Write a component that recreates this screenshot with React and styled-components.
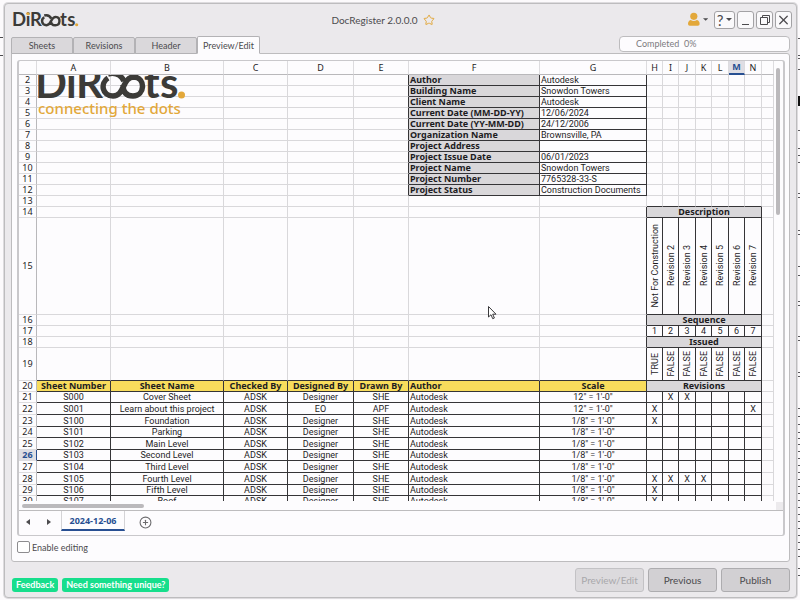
import React from "react";
import styled, { createGlobalStyle, css } from "styled-components";
import { Star, X, CirclePlus } from "lucide-react";

const UI = `Lato, "Open Sans", sans-serif`;
const SHEET = `Roboto, "Noto Sans", sans-serif`;
const SHEET_BOLD = `"Noto Sans", "Open Sans", sans-serif`;
const INK = "#3c3b38";
const GOLD = "#e3a83a";
const LINE = "#bdbcbe";
const BLUE = "#274f92";

const Global = createGlobalStyle`
  * { box-sizing: border-box; }
  html, body { margin: 0; background: #fcfafc; }
  button, input { font: inherit; color: inherit; margin: 0; padding: 0; }
`;

const Page = styled.div`
  position: relative;
  display: flex;
  height: 100vh;
  min-height: 420px;
  padding: 3px 3px 2px 4px;
  font-family: ${UI};
  font-size: 9px;
  color: #4c4b4e;
  overflow: hidden;
`;
const Backdrop = styled.svg`
  position: absolute;
  top: 0;
  ${(p) => (p.$side === "right" ? "right: 0;" : "left: 0;")}
`;
const Window = styled.main`
  position: relative;
  flex: 1;
  min-width: 0;
  display: flex;
  flex-direction: column;
  padding: 0 6px 5px 6px;
  background: #ebe9ec;
  border: 1px solid ${LINE};
  border-radius: 4px;
  box-shadow: 0 0 0 1px #dddbde;
`;
const TitleBar = styled.header`
  display: flex;
  justify-content: space-between;
  align-items: center;
  height: 31px;
  margin-right: -2px;
  padding-left: 2px;
`;
const Title = styled.h1`
  display: flex;
  align-items: center;
  gap: 5px;
  margin: 0;
  font-size: 10px;
  font-weight: 400;
  line-height: 16px;
`;
const TitleActions = styled.div`
  display: flex;
  justify-content: flex-end;
  align-items: center;
  gap: 2px;
`;
const IconButton = styled.button`
  display: flex;
  align-items: center;
  justify-content: center;
  gap: 3px;
  width: ${(p) => p.$w || 17}px;
  height: 18px;
  border: 1px solid #a3a2a5;
  border-radius: 3px;
  background: #faf9fb;
  ${(p) => p.$bare && css`
    margin-right: 3px;
    border-color: transparent;
    background: transparent;
  `}
`;
const Help = styled.span`
  font-size: 15px;
  line-height: 16px;
`;
const TabRow = styled.div`
  display: flex;
  justify-content: space-between;
  align-items: flex-end;
  height: 18px;
`;
const Tabs = styled.nav`
  display: flex;
  align-items: flex-end;
  margin-bottom: -1px;
`;
const Tab = styled.button`
  position: relative;
  width: ${(p) => (p.$active ? 63 : 62)}px;
  height: ${(p) => (p.$active ? 18 : 17)}px;
  border: 1px solid #b3b2b5;
  border-bottom-color: ${(p) => (p.$active ? "#fdfcfe" : "#b3b2b5")};
  border-radius: 2px 2px 0 0;
  background: ${(p) => (p.$active ? "#fdfcfe" : "#dad8db")};
  white-space: nowrap;
`;
const Progress = styled.div`
  width: 171px;
  height: 16px;
  margin-bottom: 1px;
  padding-left: 16px;
  border: 1px solid ${LINE};
  border-radius: 4px;
  background: #fdfcfe;
  color: #7c7b7e;
  line-height: 14px;
  white-space: pre;
`;
const Panel = styled.section`
  flex: 1;
  min-height: 0;
  display: flex;
  flex-direction: column;
  padding: 6px 4px 0 5px;
  border: 1px solid ${LINE};
  border-radius: 0 3px 3px 3px;
  background: #fdfcfe;
`;
const SheetBox = styled.div`
  flex: 1;
  min-height: 0;
  display: flex;
  flex-direction: column;
  border: 1px solid #c9c8cb;
  border-width: 1px 2px;
  border-radius: 3px;
`;
const SheetMain = styled.div`
  flex: 1;
  min-height: 0;
  display: flex;
`;
const Viewport = styled.div`
  position: relative;
  flex: 1;
  min-width: 0;
  overflow: hidden;
`;
const VTrack = styled.div`
  width: 9px;
  padding: 7px 3px 0 2px;
`;
const VThumb = styled.div`
  height: 34%;
  border-radius: 2px;
  background: #bbb9bc;
`;
const HTrack = styled.div`
  display: flex;
  align-items: center;
  justify-content: space-between;
  height: 9px;
  padding-left: 3px;
`;
const HThumb = styled.div`
  width: 16%;
  height: 4px;
  border-radius: 2px;
  background: #bbb9bc;
`;
const Corner = styled.div`
  width: 7px;
  height: 8px;
  background: #eceaed;
`;
const Grid = styled.table`
  width: 100%;
  table-layout: fixed;
  border-collapse: separate;
  border-spacing: 0;
  font-family: ${SHEET};
  font-size: 9px;
  line-height: 10px;
  color: #1d1c1f;
`;
const Col = styled.col`
  width: ${(p) => (p.$w ? `${p.$w}px` : "auto")};
`;
const Row = styled.tr`
  height: ${(p) => p.$h}px;
`;
const active = css`
  background: #dfdee4;
  color: ${BLUE};
  font-weight: 700;
`;
const ColHead = styled.th`
  height: 14px;
  padding: 0;
  border-right: 1px solid #dddcdf;
  border-bottom: 1px solid #b9b8bb;
  font-family: ${SHEET_BOLD};
  font-weight: 400;
  ${(p) => p.$active && active}
  ${(p) => p.$active && css`border-bottom: 2px solid ${BLUE};`}
`;
const RowHead = styled.th`
  padding: 0;
  border-right: 1px solid #b9b8bb;
  border-bottom: 1px solid #dddcdf;
  font-family: ${SHEET_BOLD};
  font-weight: 400;
  ${(p) => p.$active && active}
  ${(p) => p.$active && css`border-right-color: ${BLUE};`}
`;
const Cell = styled.td`
  padding: 0 1px;
  border-right: 1px solid ${(p) => (p.$right ? "#353437" : "#d9d8db")};
  border-bottom: 1px solid ${(p) => (p.$bottom ? "#353437" : "#d9d8db")};
  background: ${(p) => p.$bg || "transparent"};
  font-family: ${(p) => (p.$bold ? SHEET_BOLD : SHEET)};
  font-weight: ${(p) => (p.$bold ? 700 : 400)};
  text-align: ${(p) => (p.$left ? "left" : "center")};
  white-space: nowrap;
`;
const Vertical = styled.span`
  display: inline-block;
  writing-mode: vertical-rl;
  transform: rotate(180deg);
  line-height: 12px;
  vertical-align: middle;
`;
const LogoLayer = styled.div`
  position: absolute;
  top: 14px;
  left: 19px;
  height: 45px;
  overflow: hidden;
  display: flex;
  align-items: flex-end;
`;
const SheetTabs = styled.div`
  display: flex;
  align-items: flex-start;
  height: 25px;
  border-top: 1px solid ${LINE};
`;
const Arrow = styled.button`
  width: 21px;
  height: 20px;
  padding-right: 3px;
  border: 0;
  background: none;
`;
const SheetTab = styled.button`
  width: 64px;
  height: 20px;
  border: 1px solid #d4d3d6;
  border-width: 0 1px 2px;
  border-bottom-color: ${BLUE};
  background: none;
  color: ${BLUE};
  font-family: ${SHEET_BOLD};
  font-weight: 700;
  font-size: 9px;
`;
const AddSheet = styled.button`
  display: flex;
  align-items: center;
  justify-content: center;
  width: 40px;
  height: 22px;
  border: 0;
  background: none;
  color: #6c6b6e;
`;
const Option = styled.label`
  display: flex;
  align-items: center;
  gap: 2px;
  height: 25px;
  padding-bottom: 3px;
`;
const Check = styled.input`
  appearance: none;
  width: 13px;
  height: 12px;
  border: 1px solid #8d8c8f;
  border-radius: 2px;
  background: #fff;
`;
const Footer = styled.footer`
  display: flex;
  justify-content: space-between;
  align-items: flex-end;
  height: 30px;
`;
const Links = styled.div`
  display: flex;
  gap: 4px;
  padding-left: 1px;
`;
const Pill = styled.a`
  padding: 0 4px;
  border-radius: 3px;
  background: #17de8c;
  color: #fff;
  font-weight: 700;
  line-height: 14px;
  text-decoration: none;
`;
const Actions = styled.div`
  display: flex;
  gap: 4px;
`;
const Action = styled.button`
  width: 69px;
  height: 24px;
  border: 1px solid #adacaf;
  border-radius: 3px;
  background: #d2d0d3;
  font-size: 10px;
  &:disabled {
    background: #dcdadd;
    border-color: #c3c2c5;
    color: #a9a8ab;
  }
`;
const LogoDrawing = styled.svg`
  display: block;
  flex: none;
  overflow: visible;
`;

function Logo({ width, tagline }) {
  const h = tagline ? 54 : 34;
  return (
    <LogoDrawing width={width} height={Math.round((width * h) / 148)} viewBox={`0 0 148 ${h}`} role="img" aria-label="DiRoots">
      <g fill={INK} fontFamily="Lato, sans-serif" fontSize="42" fontWeight="700">
        <text x="-3 28 38" y="32">DiR</text>
        <text x="106 122" y="32">ts</text>
      </g>
      <circle cx="33.500" cy="4" r="3.600" fill={tagline ? INK : GOLD} />
      <g fill="none" stroke={INK} strokeWidth="5.500">
        <path d="M70 12 C62 17 64 30 75 30 C87 30 84 11 96 11 C108 12 107 30 95 30 C86 30 85 23 85 19" />
        <path d="M70 8 C77 6 83 9 86 15" />
      </g>
      <circle cx="143.500" cy="29" r="3.500" fill={GOLD} />
      {tagline && (
        <text x="0" y="48" fill={GOLD} fontFamily='"Noto Sans", sans-serif' fontSize="15" fontWeight="500">
          connecting the dots
        </text>
      )}
    </LogoDrawing>
  );
}

const Caret = ({ d = "M0 0h6L3 3z", w = 6, h = 3 }) => (
  <svg width={w} height={h} viewBox={`0 0 ${w} ${h}`} fill="#4c4b4e"><path d={d} /></svg>
);

const COLS = [
  ["A", 74], ["B", 113], ["C", 64], ["D", 66], ["E", 55], ["F", 131], ["G", 107],
  ["H", 16], ["I", 16], ["J", 17], ["K", 16], ["L", 17], ["M", 16], ["N", 17], ["", 0],
];
const HEIGHTS = { 15: 97, 19: 33, 22: 12, 23: 12, 25: 12, 27: 12, 28: 12 };
const INFO = [
  ["Author", "Autodesk"], ["Building Name", "Snowdon Towers"], ["Client Name", "Autodesk"],
  ["Current Date (MM-DD-YY)", "12/06/2024"], ["Current Date (YY-MM-DD)", "24/12/2006"],
  ["Organization Name", "Brownsville, PA"], ["Project Address", ""], ["Project Issue Date", "06/01/2023"],
  ["Project Name", "Snowdon Towers"], ["Project Number", "7765328-33-S"], ["Project Status", "Construction Documents"],
];
const BANDS = { 14: "Description", 16: "Sequence", 18: "Issued", 20: "Revisions" };
const HEADINGS = ["Sheet Number", "Sheet Name", "Checked By", "Designed By", "Drawn By", "Author", "Scale"];
const SHEETS = [
  ["S000", "Cover Sheet", " XX    "], ["S001", "Learn about this project", "X     X"],
  ["S100", "Foundation", "X"], ["S101", "Parking", ""], ["S102", "Main Level", ""],
  ["S103", "Second Level", ""], ["S104", "Third Level", ""], ["S105", "Fourth Level", "XXXX"],
  ["S106", "Fifth Level", "X"], ["S107", "Roof", "X"],
];

const boxed = (r, c) =>
  (r >= 2 && r <= 12 && (c === 5 || c === 6)) || (r >= 14 && c >= 7 && c <= 13) || (r >= 20 && c <= 6);

function content(r, c) {
  if (c > 13) return "";
  if (r <= 12) return c === 5 || c === 6 ? INFO[r - 2][c - 5] : "";
  const k = c - 7;
  if (r === 15 && k >= 0) return <Vertical>{k === 0 ? "Not For Construction" : `Revision ${k + 1}`}</Vertical>;
  if (r === 17 && k >= 0) return k + 1;
  if (r === 19 && k >= 0) return <Vertical>{k === 0 ? "TRUE" : "FALSE"}</Vertical>;
  if (r === 20) return HEADINGS[c];
  if (r > 20) {
    const [num, name, marks] = SHEETS[r - 21];
    const odd = r === 22;
    if (k >= 0) return (marks[k] || "").trim();
    return [num, name, "ADSK", odd ? "EO" : "Designer", odd ? "APF" : "SHE", "Autodesk", r < 23 ? `12" = 1'-0"` : `1/8" = 1'-0"`][c];
  }
  return "";
}

function cells(r) {
  const out = [];
  for (let c = 0; c < COLS.length; c++) {
    const span = c === 7 && BANDS[r] ? 7 : 1;
    const last = c + span - 1;
    const label = r <= 12 && c === 5;
    out.push(
      <Cell
        key={c}
        colSpan={span}
        $right={boxed(r, last) || boxed(r, last + 1)}
        $bottom={boxed(r, c) || boxed(r + 1, c)}
        $bg={span > 1 || label ? "#d9d7da" : r === 20 && c < 7 ? "#f8dc5c" : undefined}
        $bold={span > 1 || label || r === 20}
        $left={c === 5 || (r <= 12 && c === 6)}
      >
        {span > 1 ? BANDS[r] : content(r, c)}
      </Cell>
    );
    c = last;
  }
  return out;
}

function Spreadsheet() {
  const rows = Array.from({ length: 29 }, (_, i) => i + 2);
  return (
    <Viewport>
      <Grid>
        <colgroup>
          <Col $w={18} />
          {COLS.map(([n, w]) => <Col key={n} $w={w} />)}
        </colgroup>
        <thead>
          <tr>
            <ColHead />
            {COLS.map(([n]) => <ColHead key={n} $active={n === "M"}>{n}</ColHead>)}
          </tr>
        </thead>
        <tbody>
          {rows.map((r) => (
            <Row key={r} $h={HEIGHTS[r] || 11}>
              <RowHead $active={r === 26}>{r}</RowHead>
              {cells(r)}
            </Row>
          ))}
        </tbody>
      </Grid>
      <LogoLayer><Logo width={148} tagline /></LogoLayer>
    </Viewport>
  );
}

const Pointer = styled.svg`
  position: absolute;
  left: 61%;
  top: 51%;
`;

const MARKS = [38, 55, 58, 69, 130, 148, 155, 162, 193, 197, 230, 234, 266, 275, 301, 305, 336, 340, 372, 376, 408, 416, 424, 432, 438, 444, 451, 458, 465, 472, 479, 486, 493, 500, 507, 514, 521, 528, 535, 542, 549, 556, 568, 575];

export default function App() {
  return (
    <Page>
      <Global />
      <Backdrop width="4" height="600" $side="left" stroke="#4a494c">
        <path d="M0 37.500h4M0 55.500h4" />
      </Backdrop>
      <Backdrop width="3" height="600" $side="right" stroke="#5a595c">
        <path d={MARKS.map((y) => `M0 ${y}.500h3`).join("")} />
        <path d="M1.500 96v10" strokeWidth="3" stroke="#111" />
      </Backdrop>
      <Window>
        <TitleBar>
          <Logo width={66} />
          <Title>DocRegister 2.0.0.0 <Star size={12} color={GOLD} strokeWidth={2} /></Title>
          <TitleActions>
            <IconButton $bare $w={22} aria-label="Account">
              <svg width="13" height="15" viewBox="0 0 13 15" fill={GOLD}>
                <circle cx="6.500" cy="4" r="4" />
                <path d="M3 8q3.500 2.500 7 0 3 1 3 4.500 0 2-2 2H2q-2 0-2-2Q0 9 3 8z" />
              </svg>
              <Caret />
            </IconButton>
            <IconButton $w={21} aria-label="Help"><Help>?</Help><Caret /></IconButton>
            <IconButton aria-label="Minimize">
              <svg width="9" height="12"><path d="M1 10.500h7" stroke="#4c4b4e" /></svg>
            </IconButton>
            <IconButton aria-label="Restore">
              <svg width="12" height="12" fill="none" stroke="#4c4b4e">
                <path d="M1.500 3.500h7v7h-7zM3.500 3.500v-2h7v7h-2" />
              </svg>
            </IconButton>
            <IconButton aria-label="Close"><X size={16} strokeWidth={2} /></IconButton>
          </TitleActions>
        </TitleBar>
        <TabRow>
          <Tabs>
            <Tab>Sheets</Tab>
            <Tab>Revisions</Tab>
            <Tab>Header</Tab>
            <Tab $active>Preview/Edit</Tab>
          </Tabs>
          <Progress>{"Completed  0%"}</Progress>
        </TabRow>
        <Panel>
          <SheetBox>
            <SheetMain>
              <Spreadsheet />
              <VTrack><VThumb /></VTrack>
            </SheetMain>
            <HTrack><HThumb /><Corner /></HTrack>
            <SheetTabs>
              <Arrow aria-label="Previous sheet"><Caret w={4} h={6} d="M4 0v6L0 3z" /></Arrow>
              <Arrow aria-label="Next sheet"><Caret w={4} h={6} d="M0 0v6L4 3z" /></Arrow>
              <SheetTab>2024-12-06</SheetTab>
              <AddSheet aria-label="Add sheet"><CirclePlus size={13} strokeWidth={2} /></AddSheet>
            </SheetTabs>
          </SheetBox>
          <Option><Check type="checkbox" /> Enable editing</Option>
        </Panel>
        <Footer>
          <Links>
            <Pill href="#feedback">Feedback</Pill>
            <Pill href="#unique">Need something unique?</Pill>
          </Links>
          <Actions>
            <Action disabled>Preview/Edit</Action>
            <Action>Previous</Action>
            <Action>Publish</Action>
          </Actions>
        </Footer>
        <Pointer width="9" height="14" viewBox="0 0 9 14" fill="#fff" stroke="#3a393c">
          <path d="M.500 .500v10.500l2.500-2.300 1.700 4 1.700-.700-1.700-3.800h3.300z" />
        </Pointer>
      </Window>
    </Page>
  );
}
